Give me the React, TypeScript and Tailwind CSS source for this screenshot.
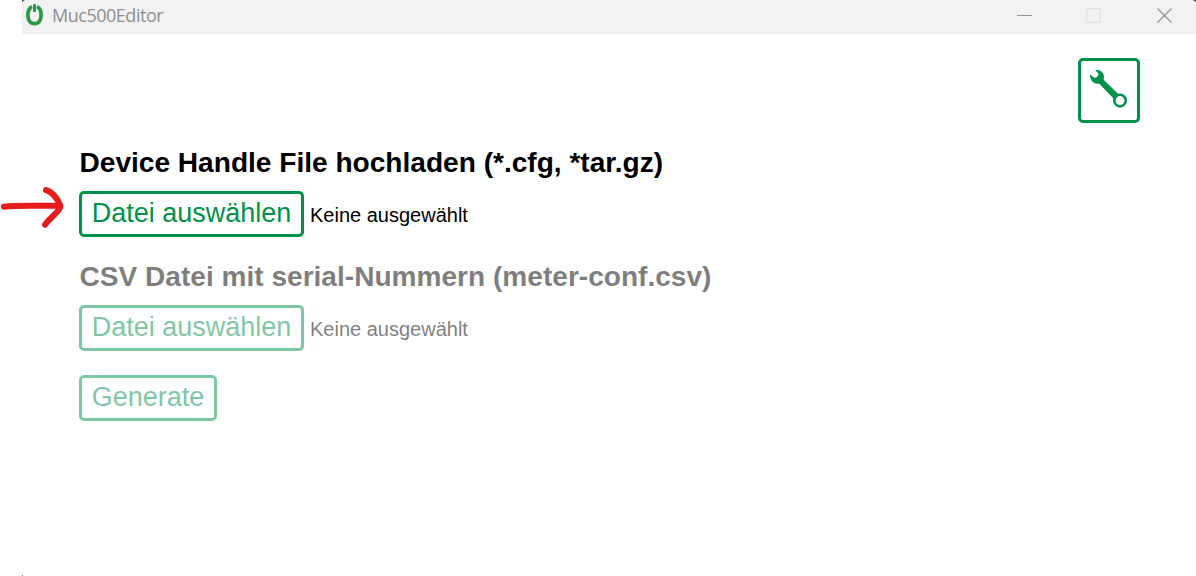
import React from 'react';

function TitleBar() {
  return (
    <header className="relative ml-[22px] flex h-[34px] shrink-0 items-start bg-[#f2f2f2]">
      <svg className="absolute left-0 top-0" width="3" height="2" viewBox="0 0 3 2">
        <path d="M0 0h3L0 2z" fill="#4a4a4f" />
      </svg>
      <svg className="absolute right-0 top-0" width="3" height="2" viewBox="0 0 3 2">
        <path d="M0 0h3v2z" fill="#4a4a4f" />
      </svg>
      <svg className="ml-[3px] mt-[3px]" width="20" height="24" viewBox="0 0 20 24" fill="none" stroke="#289a43">
        <path d="M7 3.700C4.300 5 2.900 8.200 2.900 12.200C2.900 17.300 5.300 20.600 9.500 20.600C13.700 20.600 16.100 17.300 16.100 12.200C16.100 8.200 14.700 5 12 3.700" strokeWidth="3.700" />
        <path d="M9.500 1.200v7.800" strokeWidth="3" />
      </svg>
      <span className="ml-[7px] mt-[3px] whitespace-nowrap font-['Open_Sans','Noto_Sans',sans-serif] text-[18px] leading-[25px] tracking-[-0.480px] text-[#8f8f8f]">
        Muc500Editor
      </span>
      <div className="ml-auto mr-[23px] mt-2 flex text-[#949494]">
        <svg width="16" height="16" viewBox="0 0 16 16" fill="none" stroke="currentColor">
          <path d="M0 7.500h15" />
        </svg>
        <svg className="ml-[53px]" width="16" height="16" viewBox="0 0 16 16" fill="none" stroke="#dfdfdf">
          <rect x="0.600" y="0.600" width="13.800" height="13.800" rx="1" strokeWidth="1.200" />
        </svg>
        <svg className="ml-[55px]" width="16" height="16" viewBox="0 0 16 16" fill="none" stroke="currentColor">
          <path d="M0.500 0.500l14 14M14.500 0.500l-14 14" strokeWidth="1.300" />
        </svg>
      </div>
    </header>
  );
}

function OutlineButton({ children, disabled }: { children: React.ReactNode; disabled?: boolean }) {
  return (
    <button
      type="button"
      disabled={disabled}
      className="h-[46px] whitespace-nowrap rounded-[5px] border-[3px] border-[#00914b] bg-white px-[9.700px] pb-px text-[27px] leading-[37px] text-[#00914b]"
    >
      {children}
    </button>
  );
}

function FilePicker({ title, disabled }: { title: string; disabled?: boolean }) {
  return (
    <section className={disabled ? 'opacity-50' : ''}>
      <h3 className="pl-[0.500px] whitespace-nowrap text-[28.080px] font-bold leading-8">{title}</h3>
      <div className="mt-3 flex items-center gap-[6px]">
        <OutlineButton disabled={disabled}>Datei auswählen</OutlineButton>
        <span className="mt-px whitespace-nowrap text-[20px] leading-6">Keine ausgewählt</span>
      </div>
    </section>
  );
}

function WrenchIcon() {
  return (
    <svg width="40" height="40" viewBox="0 0 40 40" fill="none">
      <path
        d="M6.200 1.400C10.500 -0.300 15.100 3.400 15 7.800C15 9 14.900 9.900 14.600 10.700L29.500 25.300L25 29.900L10.300 14.700C5.300 15.700 0.300 11.500 1.200 5.300L4.700 8.600C6.800 9.400 9.600 7.800 9.300 4.500C8.800 3.200 7.500 2.500 6.200 1.400Z"
        fill="#00914b"
      />
      <circle cx="31" cy="31.600" r="5.800" fill="white" stroke="#00914b" strokeWidth="2.500" />
    </svg>
  );
}

export default function App() {
  return (
    <div className="relative flex h-[576px] w-[1196px] flex-col overflow-hidden bg-white font-['Liberation_Sans',Arial,sans-serif] text-black">
      <TitleBar />
      <div className="mr-[56px] mt-6 flex justify-end">
        <button
          type="button"
          aria-label="Einstellungen"
          className="flex h-[65px] w-[62px] rounded-[5px] border-[3px] border-[#00914b] pl-2 pt-2"
        >
          <WrenchIcon />
        </button>
      </div>
      <main className="ml-[79px] mt-6 flex flex-col items-start">
        <FilePicker title="Device Handle File hochladen (*.cfg, *tar.gz)" />
        <div className="mt-6">
          <FilePicker title="CSV Datei mit serial-Nummern (meter-conf.csv)" disabled />
        </div>
        <div className="mt-6 opacity-50">
          <OutlineButton disabled>Generate</OutlineButton>
        </div>
      </main>
      <div className="ml-[22px] mt-auto h-px w-px bg-[#777777]" />
      <svg className="absolute left-0 top-[184px]" width="68" height="46" viewBox="0 0 68 46" fill="none" stroke="#e81c1c" strokeLinecap="round" strokeLinejoin="round">
        <path d="M3.800 22.700C18 21 36 22 59 21.800" strokeWidth="6" />
        <path d="M46 6C53 8 57 14 60.300 21.500Q60.500 23.500 59 25.500C55 31 49 35 45 40.800" strokeWidth="6" />
      </svg>
    </div>
  );
}
